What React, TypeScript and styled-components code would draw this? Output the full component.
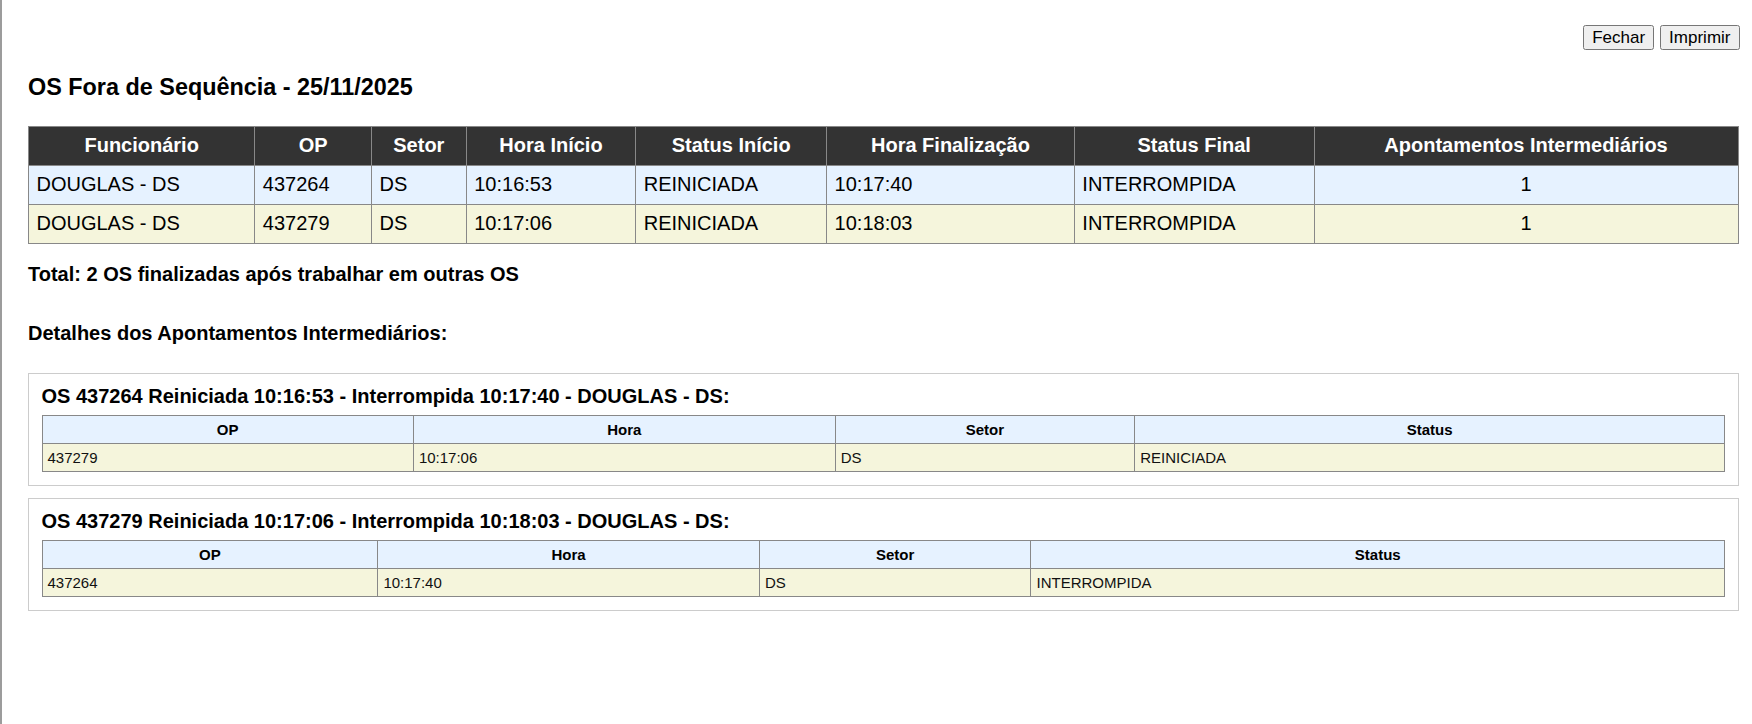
import React from "react";
import styled, { createGlobalStyle } from "styled-components";

const GlobalStyle = createGlobalStyle`
  html, body {
    margin: 0;
    padding: 0;
    background: #ffffff;
  }
  body {
    font-family: "Liberation Sans", Arial, sans-serif;
    color: #000000;
  }
`;

// data
const mainCols = [226.5, 116.7, 94.8, 169.6, 191, 247.9, 239.9, 424.1];
const mainHead = [
  "Funcionário",
  "OP",
  "Setor",
  "Hora Início",
  "Status Início",
  "Hora Finalização",
  "Status Final",
  "Apontamentos Intermediários",
];

const rows = [
  {
    func: "DOUGLAS - DS",
    op: "437264",
    setor: "DS",
    horaInicio: "10:16:53",
    statusInicio: "REINICIADA",
    horaFim: "10:17:40",
    statusFinal: "INTERROMPIDA",
    apont: 1,
  },
  {
    func: "DOUGLAS - DS",
    op: "437279",
    setor: "DS",
    horaInicio: "10:17:06",
    statusInicio: "REINICIADA",
    horaFim: "10:18:03",
    statusFinal: "INTERROMPIDA",
    apont: 1,
  },
];

const details = [
  {
    op: "437264",
    inicio: "10:16:53",
    fim: "10:17:40",
    func: "DOUGLAS - DS",
    cols: [371.5, 421.9, 299.6, 590],
    items: [{ op: "437279", hora: "10:17:06", setor: "DS", status: "REINICIADA" }],
  },
  {
    op: "437279",
    inicio: "10:17:06",
    fim: "10:18:03",
    func: "DOUGLAS - DS",
    cols: [336, 381.6, 271.7, 693.7],
    items: [{ op: "437264", hora: "10:17:40", setor: "DS", status: "INTERROMPIDA" }],
  },
];

const pct = (list: number[], i: number) =>
  `${(list[i] / list.reduce((a, b) => a + b, 0)) * 100}%`;

const Page = styled.div`
  min-height: 724px;
  box-sizing: border-box;
  border-left: 2px solid #9c9c9c;
  padding: 25px 13.5px 20px 26px;
`;

const Toolbar = styled.div`
  display: flex;
  justify-content: flex-end;
  gap: 6px;
  margin-right: -1px;
`;

const Button = styled.button`
  height: 25px;
  padding: 0 8px;
  font-family: "Liberation Sans", Arial, sans-serif;
  font-size: 17px;
  color: #000000;
  background: #efefef;
  border: 1px solid #767676;
  border-radius: 2.5px;
`;

const Title = styled.h3`
  margin: 23.7px 0 25px;
  font-size: 23.4px;
  font-weight: bold;
  line-height: normal;
`;

const MainTable = styled.table`
  width: 100%;
  border-collapse: collapse;
  table-layout: fixed;
  font-size: 20px;

  tbody tr:nth-child(odd) {
    background: #e6f2ff;
  }
  tbody tr:nth-child(even) {
    background: #f5f5dc;
  }
`;

const HeadCell = styled.th`
  padding: 7.5px;
  background: #333333;
  color: #ffffff;
  font-weight: bold;
  text-align: center;
  border: 1px solid #888888;
  line-height: normal;
  white-space: nowrap;
`;

const Cell = styled.td<{ $center?: boolean }>`
  padding: 7.5px;
  text-align: ${({ $center }) => ($center ? "center" : "left")};
  border: 1px solid #888888;
  line-height: normal;
  white-space: nowrap;
`;

const Col = styled.col<{ $w: string }>`
  width: ${({ $w }) => $w};
`;

const Total = styled.p`
  margin: 19px 0 0;
  font-size: 20px;
  font-weight: bold;
  line-height: normal;
`;

const SectionTitle = styled.h4`
  margin: 36.7px 0 27.7px;
  font-size: 20px;
  font-weight: bold;
  line-height: normal;
`;

const DetailBox = styled.div`
  border: 1px solid #cccccc;
  padding: 11px 12.5px 12.5px;
  margin-bottom: 12.5px;
`;

const DetailTitle = styled.h4`
  margin: 0 0 7px;
  font-size: 20px;
  font-weight: bold;
  line-height: normal;
  white-space: nowrap;
`;

const SmallTable = styled.table`
  width: 100%;
  border-collapse: collapse;
  table-layout: fixed;
  font-size: 15px;
`;

const SmallHead = styled.th`
  padding: 5px;
  background: #e6f2ff;
  color: #000000;
  font-weight: bold;
  text-align: center;
  border: 1px solid #888888;
  line-height: normal;
`;

const SmallCell = styled.td`
  padding: 5px;
  background: #f5f5dc;
  color: #111111;
  text-align: left;
  border: 1px solid #888888;
  line-height: normal;
`;

export default function App() {
  return (
    <>
      <GlobalStyle />
      <Page>
        <Toolbar>
          <Button>Fechar</Button>
          <Button>Imprimir</Button>
        </Toolbar>

        <Title>OS Fora de Sequência - 25/11/2025</Title>

        <MainTable>
          <colgroup>
            {mainCols.map((_, i) => (
              <Col key={i} $w={pct(mainCols, i)} />
            ))}
          </colgroup>
          <thead>
            <tr>
              {mainHead.map((h) => (
                <HeadCell key={h}>{h}</HeadCell>
              ))}
            </tr>
          </thead>
          <tbody>
            {rows.map((r) => (
              <tr key={r.op}>
                <Cell>{r.func}</Cell>
                <Cell>{r.op}</Cell>
                <Cell>{r.setor}</Cell>
                <Cell>{r.horaInicio}</Cell>
                <Cell>{r.statusInicio}</Cell>
                <Cell>{r.horaFim}</Cell>
                <Cell>{r.statusFinal}</Cell>
                <Cell $center>{r.apont}</Cell>
              </tr>
            ))}
          </tbody>
        </MainTable>

        <Total>Total: 2 OS finalizadas após trabalhar em outras OS</Total>

        <SectionTitle>Detalhes dos Apontamentos Intermediários:</SectionTitle>

        {details.map((d) => (
          <DetailBox key={d.op}>
            <DetailTitle>
              OS {d.op} Reiniciada {d.inicio} - Interrompida {d.fim} - {d.func}:
            </DetailTitle>
            <SmallTable>
              <colgroup>
                {d.cols.map((_, i) => (
                  <Col key={i} $w={pct(d.cols, i)} />
                ))}
              </colgroup>
              <thead>
                <tr>
                  <SmallHead>OP</SmallHead>
                  <SmallHead>Hora</SmallHead>
                  <SmallHead>Setor</SmallHead>
                  <SmallHead>Status</SmallHead>
                </tr>
              </thead>
              <tbody>
                {d.items.map((it) => (
                  <tr key={it.op}>
                    <SmallCell>{it.op}</SmallCell>
                    <SmallCell>{it.hora}</SmallCell>
                    <SmallCell>{it.setor}</SmallCell>
                    <SmallCell>{it.status}</SmallCell>
                  </tr>
                ))}
              </tbody>
            </SmallTable>
          </DetailBox>
        ))}
      </Page>
    </>
  );
}
